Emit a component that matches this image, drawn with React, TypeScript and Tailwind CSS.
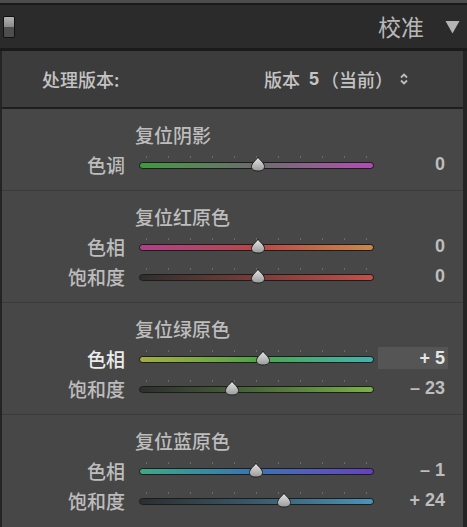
type Slider = {
  label: string;
  value: number;
  track: string;
  active?: boolean;
};

type Section = {
  title: string;
  rows: Slider[];
};

const sections: Section[] = [
  {
    title: "复位阴影",
    rows: [
      {
        label: "色调",
        value: 0,
        track: "bg-linear-to-r from-[#3c9a3c] via-[#6b6b6b] to-[#b24ab4]",
      },
    ],
  },
  {
    title: "复位红原色",
    rows: [
      {
        label: "色相",
        value: 0,
        track: "bg-linear-to-r from-[#b0408a] via-[#b84646] to-[#c8884a]",
      },
      {
        label: "饱和度",
        value: 0,
        track: "bg-linear-to-r from-[#2e2e2e] via-[#7a3c38] to-[#c4504a]",
      },
    ],
  },
  {
    title: "复位绿原色",
    rows: [
      {
        label: "色相",
        value: 5,
        active: true,
        track: "bg-linear-to-r from-[#a4ac42] via-[#4ea448] to-[#44b2ac]",
      },
      {
        label: "饱和度",
        value: -23,
        track: "bg-linear-to-r from-[#2e2e2e] via-[#4a6a38] to-[#7ab24a]",
      },
    ],
  },
  {
    title: "复位蓝原色",
    rows: [
      {
        label: "色相",
        value: -1,
        track: "bg-linear-to-r from-[#3ea886] via-[#3a72b2] to-[#6440c0]",
      },
      {
        label: "饱和度",
        value: 24,
        track: "bg-linear-to-r from-[#2c2e30] via-[#3a5a6c] to-[#4a94ba]",
      },
    ],
  },
];

const cjk = "font-['Noto_Sans_CJK_SC','Noto_Sans',sans-serif]";
const num = "font-['Liberation_Sans','Arial',sans-serif]";

function formatValue(v: number) {
  if (v === 0) return "0";
  return v > 0 ? `+ ${v}` : `– ${Math.abs(v)}`;
}

function Thumb() {
  return (
    <svg width="16" height="16" viewBox="0 0 16 16">
      <defs>
        <linearGradient id="thumbFill" x1="0" y1="0" x2="0" y2="1">
          <stop offset="0" stopColor="#e6e6e6" />
          <stop offset="1" stopColor="#9a9a9a" />
        </linearGradient>
      </defs>
      <path
        d="M8 1 C9.5 4 14.5 7 14.5 10.5 C14.5 13.5 12 15 8 15 C4 15 1.5 13.5 1.5 10.5 C1.5 7 6.5 4 8 1 Z"
        fill="url(#thumbFill)"
        stroke="#1e1e1e"
        strokeWidth="1"
      />
    </svg>
  );
}

function SliderRow({ row }: { row: Slider }) {
  const center = 118.5 + row.value * 1.1;
  return (
    <div className="flex h-[30px] items-center">
      <div
        className={`w-[123px] text-right text-[19px] font-medium leading-none ${cjk} ${
          row.active ? "text-[#ececec]" : "text-[#bdbdbd]"
        }`}
      >
        {row.label}
      </div>
      <div className="relative ml-[14px] h-[30px] w-[235px]">
        {/* ticks */}
        <div className="absolute left-[7px] right-[7px] top-[7px] flex justify-between">
          {Array.from({ length: 11 }).map((_, i) => (
            <div key={i} className="h-[2px] w-px bg-[#6a6a6a]" />
          ))}
        </div>
        <div
          className={`absolute left-0 right-0 top-[13px] h-[7px] rounded-full border border-[#1c1c1c] ${row.track}`}
        />
        <div className="absolute top-[7px]" style={{ left: center - 8 }}>
          <Thumb />
        </div>
      </div>
      <div
        className={`ml-[4px] flex h-[22px] w-[70px] items-center justify-end pr-[3px] text-[18px] font-bold ${num} ${
          row.active ? "bg-[#555555] text-[#e4e4e4]" : "text-[#bdbdbd]"
        }`}
      >
        {formatValue(row.value)}
      </div>
    </div>
  );
}

export default function App() {
  return (
    <div className="flex h-[527px] w-[467px] flex-col overflow-hidden bg-[#1e1e1e]">
      <div className="h-[3px] bg-[#4c4c4c]" />
      <div className="h-[2px] bg-[#1a1a1a]" />

      {/* Panel header */}
      <div className="flex h-[43px] items-center bg-[#2b2b2b] pr-[7px]">
        <div className="ml-[3px] flex h-[22px] w-[12px] flex-col overflow-hidden rounded-[2px] border border-[#111]">
          <div className="flex-1 bg-linear-to-b from-[#b4b4b4] to-[#8a8a8a]" />
          <div className="flex-1 bg-[#4e4e4e]" />
        </div>
        <div className={`flex-1 text-right text-[23px] leading-none text-[#b8b8b8] ${cjk}`}>
          校准
        </div>
        <svg width="15" height="14" viewBox="0 0 15 14" className="ml-[21px]">
          <polygon points="0.5,1 14.5,1 7.5,13.5" fill="#b4b4b4" />
        </svg>
      </div>
      <div className="h-[3px] bg-[#1a1a1a]" />

      <div className="flex flex-1 flex-col border-l-2 border-r-4 border-[#242424]">
        {/* Process version */}
        <div className="flex h-[56px] items-center bg-[#3c3c3c]">
          <div className={`ml-[40px] text-[18px] font-medium leading-none text-[#c4c4c4] ${cjk}`}>
            处理版本:
          </div>
          <div className={`ml-auto flex items-center text-[18px] font-medium leading-none text-[#c4c4c4] ${cjk}`}>
            <span>版本</span>
            <span className={`ml-[9px] mr-[2px] font-bold ${num}`}>5</span>
            <span>（当前）</span>
          </div>
          <svg width="10" height="14" viewBox="0 0 10 14" className="ml-[6px] mr-[54px]">
            <path d="M2 5.5 L5 2.5 L8 5.5" fill="none" stroke="#bdbdbd" strokeWidth="1.8" />
            <path d="M2 8.5 L5 11.5 L8 8.5" fill="none" stroke="#bdbdbd" strokeWidth="1.8" />
          </svg>
        </div>
        <div className="h-[2px] bg-[#1e1e1e]" />

        {/* Calibration sections */}
        <div className="flex flex-1 flex-col bg-[#474747]">
          {sections.map((s, i) => (
            <div
              key={s.title}
              className={`pb-[11px] pt-[13px] ${i > 0 ? "border-t border-[#3a3a3a]" : ""}`}
            >
              <div
                className={`ml-[133px] flex h-[24px] items-center text-[19px] font-medium leading-none text-[#bdbdbd] ${cjk}`}
              >
                {s.title}
              </div>
              <div className="mt-[3px] flex flex-col">
                {s.rows.map((r) => (
                  <SliderRow key={s.title + r.label} row={r} />
                ))}
              </div>
            </div>
          ))}
        </div>
      </div>
    </div>
  );
}
